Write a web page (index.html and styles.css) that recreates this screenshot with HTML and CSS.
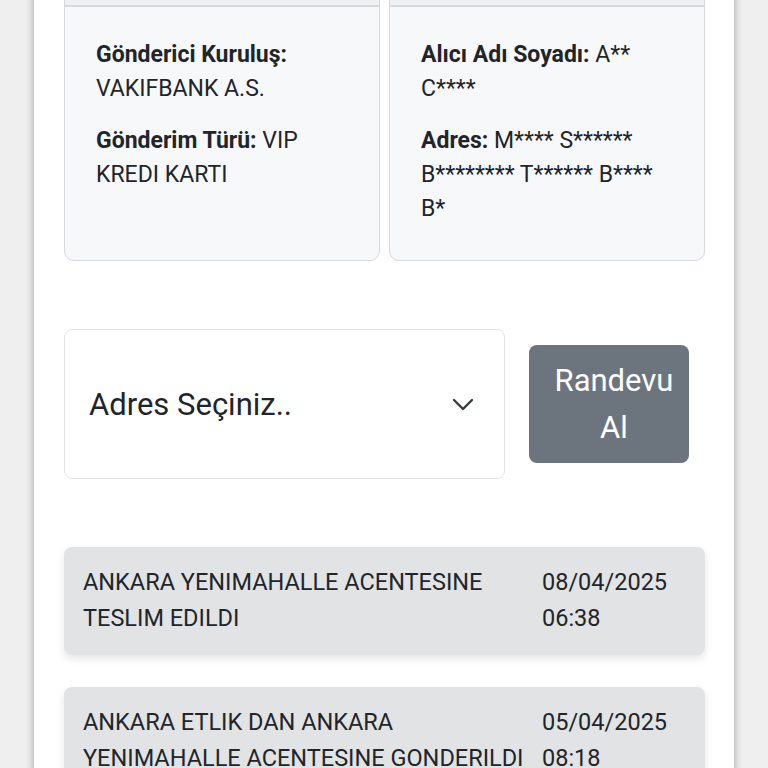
FILE: index.html
```html
<!DOCTYPE html>
<html lang="tr">
<head>
    <meta charset="UTF-8">
    <meta name="viewport" content="width=device-width, initial-scale=1.0">
    <title>Gönderi Takip</title>
    <link rel="stylesheet" href="styles.css">
</head>
<body>

<div class="panel">
    <div class="cards">
        <div class="card">
            <div class="card-header"></div>
            <div class="card-body">
                <p><b>Gönderici Kuruluş:</b><br>VAKIFBANK A.S.</p>
                <p><b>Gönderim Türü:</b> VIP KREDI KARTI</p>
            </div>
        </div>
        <div class="card">
            <div class="card-header"></div>
            <div class="card-body">
                <p><b>Alıcı Adı Soyadı:</b> A** C****</p>
                <p><b>Adres:</b> M**** S****** B******** T****** B**** B*</p>
            </div>
        </div>
    </div>

    <div class="appointment">
        <div class="address-select">
            <span>Adres Seçiniz..</span>
            <svg class="chevron" width="22" height="14" viewBox="0 0 22 14">
                <path d="M2 2 L11 11 L20 2" fill="none" stroke="#343a40" stroke-width="2.4" stroke-linecap="round" stroke-linejoin="round"/>
            </svg>
        </div>
        <button class="btn-appointment">Randevu<br>Al</button>
    </div>

    <div class="history">
        <div class="history-item">
            <div class="history-text">ANKARA YENIMAHALLE ACENTESINE TESLIM EDILDI</div>
            <div class="history-date">08/04/2025<br>06:38</div>
        </div>
        <div class="history-item">
            <div class="history-text">ANKARA ETLIK DAN ANKARA<br>YENIMAHALLE ACENTESINE GONDERILDI</div>
            <div class="history-date">05/04/2025<br>08:18</div>
        </div>
    </div>
</div>

</body>
</html>
```

FILE: styles.css
```css
body {
    font-family: Roboto, "Liberation Sans", sans-serif;
    margin: 0;
    padding: 0;
    background-color: #efefef;
    color: #212529;
}
.panel {
    width: 700px;
    min-height: 800px;
    margin-left: 34px;
    padding: 0 29px 0 30px;
    box-sizing: border-box;
    background-color: #fff;
    box-shadow: 0 0 8px rgba(0, 0, 0, 0.35);
}
.cards {
    display: flex;
    gap: 9px;
    margin-top: -25px;
}
.card {
    flex: 1;
    background-color: #f7f8fa;
    border: 1px solid #d6d8db;
    border-radius: 10px;
    overflow: hidden;
}
.card-header {
    height: 29px;
    background-color: #eff0f2;
    border-bottom: 2px solid #d6d8db;
}
.card-body {
    padding: 31px 31px 16px;
    font-size: 23px;
    line-height: 34px;
}
.card-body p {
    margin: 0 0 18px;
}
.card-body b {
    font-weight: 700;
}
.appointment {
    display: flex;
    align-items: center;
    margin-top: 68px;
}
.address-select {
    width: 441px;
    height: 150px;
    box-sizing: border-box;
    display: flex;
    align-items: center;
    justify-content: space-between;
    padding: 0 30px 0 24px;
    border: 1px solid #e1e3e6;
    border-radius: 8px;
    font-size: 31px;
}
.chevron {
    margin-top: 2px;
}
.btn-appointment {
    width: 160px;
    margin-left: 24px;
    padding: 12px 14px 12px 24px;
    background-color: #6c757d;
    color: #fff;
    border: none;
    border-radius: 8px;
    font-family: Roboto, "Liberation Sans", sans-serif;
    font-size: 31px;
    line-height: 47px;
}
.history {
    margin-top: 68px;
}
.history-item {
    display: flex;
    gap: 12px;
    padding: 17px 19px 19px;
    margin-bottom: 32px;
    background-color: #e2e3e5;
    border-radius: 8px;
    box-shadow: 0 4px 8px rgba(0, 0, 0, 0.1);
    font-size: 23.5px;
    line-height: 36px;
}
.history-text {
    flex: 1;
}
.history-date {
    width: 144px;
}
```
